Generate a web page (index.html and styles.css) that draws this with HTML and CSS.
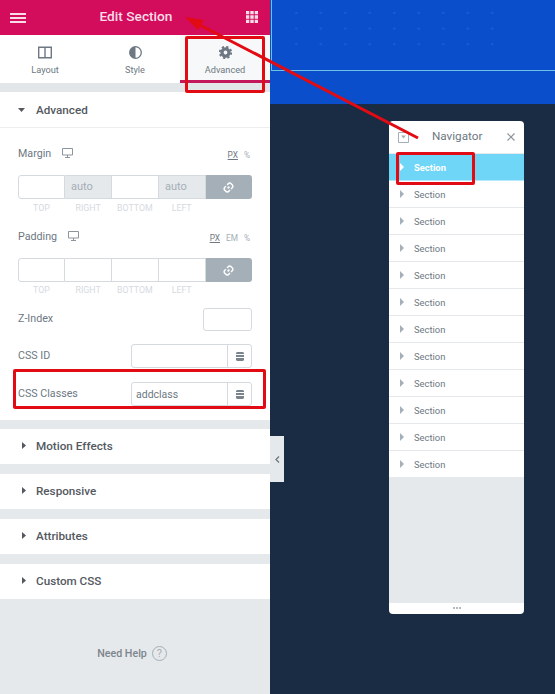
FILE: index.html
```html
<!DOCTYPE html>
<html lang="en">
<head>
<meta charset="utf-8">
<title>Edit Section</title>
<link rel="stylesheet" href="styles.css">
</head>
<body>
<div class="app">
  <aside class="panel">
    <header class="topbar">
      <svg class="ic-menu" width="16" height="10" viewBox="0 0 16 10"><path d="M0 0h16v2H0zM0 4h16v2H0zM0 8h16v2H0z" fill="#fbdde9"/></svg>
      <span class="topbar-title">Edit Section</span>
      <svg class="ic-grid" width="12" height="12" viewBox="0 0 12 12"><path d="M0 0h3.300v3.300H0zM4.300 0h3.400v3.300H4.300zM8.700 0H12v3.300H8.700zM0 4.300h3.300v3.400H0zM4.300 4.300h3.400v3.400H4.300zM8.700 4.300H12v3.400H8.700zM0 8.700h3.300V12H0zM4.300 8.700h3.400V12H4.300zM8.700 8.700H12V12H8.700z" fill="#fbdde9"/></svg>
    </header>
    <nav class="tabs">
      <div class="tab">
        <svg width="14" height="12" viewBox="0 0 14 12"><path d="M.7.700h12.600v10.600H.7zM7 .7v10.600" fill="none" stroke="#6d7882" stroke-width="1.400"/></svg>
        <span>Layout</span>
      </div>
      <div class="tab">
        <svg width="13" height="13" viewBox="0 0 13 13"><circle cx="6.500" cy="6.500" r="5.800" fill="none" stroke="#6d7882" stroke-width="1.300"/><path d="M6.500.7a5.800 5.800 0 0 0 0 11.600z" fill="#6d7882"/></svg>
        <span>Style</span>
      </div>
      <div class="tab tab-active">
        <svg width="13" height="13" viewBox="0 0 24 24" fill="none" stroke="#6d7882"><circle cx="12" cy="12" r="6.500" stroke-width="6"/><circle cx="12" cy="12" r="10.500" stroke-width="3.500" stroke-dasharray="4.250 4"/></svg>
        <span>Advanced</span>
      </div>
    </nav>
    <div class="band band-top"></div>

    <section class="acc acc-open">
      <svg class="caret" width="7" height="4" viewBox="0 0 7 4"><path d="M0 0h7L3.500 4z" fill="#54595f"/></svg>
      <span>Advanced</span>
    </section>
    <div class="content">
      <div class="label-row">
        <span class="label">Margin</span>
        <svg class="ic-device" width="11" height="10" viewBox="0 0 11 10"><path d="M.5.500h10v6.500H.5zM3 9.500h5M5.500 7v2.500" fill="none" stroke="#8d959c"/></svg>
        <span class="units"><u>PX</u><span>%</span></span>
      </div>
      <div class="dims">
        <span class="dim"></span>
        <span class="dim dim-auto">auto</span>
        <span class="dim"></span>
        <span class="dim dim-auto">auto</span>
        <span class="link"><svg width="11" height="11" viewBox="0 0 11 11"><path d="M4.600 6.400 6.400 4.600M4.200 3l1-1.200a2 2 0 0 1 3 0l1 1a2 2 0 0 1 0 3L8 7M3 4.200 1.800 5.300a2 2 0 0 0 0 3l1 1a2 2 0 0 0 3 0L7 8" fill="none" stroke="#fff" stroke-width="1.500"/></svg></span>
      </div>
      <div class="dim-labels"><span>TOP</span><span>RIGHT</span><span>BOTTOM</span><span>LEFT</span></div>

      <div class="label-row label-row-pad">
        <span class="label">Padding</span>
        <svg class="ic-device" width="11" height="10" viewBox="0 0 11 10"><path d="M.5.500h10v6.500H.5zM3 9.500h5M5.500 7v2.500" fill="none" stroke="#8d959c"/></svg>
        <span class="units"><u>PX</u><span>EM</span><span>%</span></span>
      </div>
      <div class="dims">
        <span class="dim"></span>
        <span class="dim"></span>
        <span class="dim"></span>
        <span class="dim"></span>
        <span class="link"><svg width="11" height="11" viewBox="0 0 11 11"><path d="M4.600 6.400 6.400 4.600M4.200 3l1-1.200a2 2 0 0 1 3 0l1 1a2 2 0 0 1 0 3L8 7M3 4.200 1.800 5.300a2 2 0 0 0 0 3l1 1a2 2 0 0 0 3 0L7 8" fill="none" stroke="#fff" stroke-width="1.500"/></svg></span>
      </div>
      <div class="dim-labels dim-labels-pad"><span>TOP</span><span>RIGHT</span><span>BOTTOM</span><span>LEFT</span></div>

      <div class="field field-z">
        <span class="label">Z-Index</span>
        <span class="zbox"></span>
      </div>
      <div class="field field-id">
        <span class="label">CSS ID</span>
        <span class="inputgroup">
          <span class="input"></span>
          <span class="db"><svg width="8" height="9" viewBox="0 0 8 9"><path d="M1 0h6l1 1v1H0V1zM0 3h8v2H0zM0 6h8v2L7 9H1L0 8z" fill="#7a848d"/></svg></span>
        </span>
      </div>
      <div class="field field-classes">
        <span class="label">CSS Classes</span>
        <span class="inputgroup">
          <span class="input">addclass</span>
          <span class="db"><svg width="8" height="9" viewBox="0 0 8 9"><path d="M1 0h6l1 1v1H0V1zM0 3h8v2H0zM0 6h8v2L7 9H1L0 8z" fill="#7a848d"/></svg></span>
        </span>
      </div>
    </div>

    <div class="band band-first"></div>
    <section class="acc"><svg class="caret-r" width="4" height="7" viewBox="0 0 4 7"><path d="M0 0l4 3.500L0 7z" fill="#54595f"/></svg><span>Motion Effects</span></section>
    <div class="band"></div>
    <section class="acc"><svg class="caret-r" width="4" height="7" viewBox="0 0 4 7"><path d="M0 0l4 3.500L0 7z" fill="#54595f"/></svg><span>Responsive</span></section>
    <div class="band"></div>
    <section class="acc"><svg class="caret-r" width="4" height="7" viewBox="0 0 4 7"><path d="M0 0l4 3.500L0 7z" fill="#54595f"/></svg><span>Attributes</span></section>
    <div class="band"></div>
    <section class="acc"><svg class="caret-r" width="4" height="7" viewBox="0 0 4 7"><path d="M0 0l4 3.500L0 7z" fill="#54595f"/></svg><span>Custom CSS</span></section>

    <footer class="help">
      <span>Need Help</span>
      <span class="help-q">?</span>
    </footer>
  </aside>

  <main class="canvas">
    <div class="hero">
      <div class="hero-outline"><div class="hero-dots"></div></div>
    </div>
  </main>
</div>

<div class="collapse"><svg width="5" height="7" viewBox="0 0 5 7"><path d="M4 .5 1 3.500l3 3" fill="none" stroke="#6d7882" stroke-width="1.300"/></svg></div>

<div class="navigator">
  <div class="nav-head">
    <svg class="nav-ic" width="11" height="11" viewBox="0 0 11 11"><path d="M.5.500h10v10H.5z" fill="none" stroke="#a4afb7"/><path d="M3 3.500h5L5.500 6.500z" fill="#a4afb7"/></svg>
    <span class="nav-title">Navigator</span>
    <svg class="nav-x" width="8" height="8" viewBox="0 0 8 8"><path d="M.5.500l7 7M7.500.5l-7 7" stroke="#8d959c" stroke-width="1.200"/></svg>
  </div>
  <div class="nav-row nav-row-active"><i></i><span>Section</span></div>
  <div class="nav-row"><i></i><span>Section</span></div>
  <div class="nav-row"><i></i><span>Section</span></div>
  <div class="nav-row"><i></i><span>Section</span></div>
  <div class="nav-row"><i></i><span>Section</span></div>
  <div class="nav-row"><i></i><span>Section</span></div>
  <div class="nav-row"><i></i><span>Section</span></div>
  <div class="nav-row"><i></i><span>Section</span></div>
  <div class="nav-row"><i></i><span>Section</span></div>
  <div class="nav-row"><i></i><span>Section</span></div>
  <div class="nav-row"><i></i><span>Section</span></div>
  <div class="nav-row"><i></i><span>Section</span></div>
  <div class="nav-empty"></div>
  <div class="nav-foot"><b></b><b></b><b></b></div>
</div>

<svg class="arrow" width="555" height="694" viewBox="0 0 555 694">
  <path d="M418 138 196 23" stroke="#e30b13" stroke-width="3" fill="none"/>
  <path d="M185 17 204 20 198 30z" fill="#e30b13"/>
</svg>
<div class="mark mark-tab"></div>
<div class="mark mark-classes"></div>
<div class="mark mark-section"></div>
</body>
</html>
```
FILE: styles.css
```css
* { box-sizing: border-box; }
html, body { margin: 0; height: 100%; }
body {
  position: relative;
  width: 555px;
  height: 694px;
  overflow: hidden;
  font-family: Roboto, "Liberation Sans", sans-serif;
  background: #1a2c44;
}
.app { display: flex; height: 694px; }

.panel {
  width: 270px;
  flex: none;
  height: 694px;
  background: #e6e9ec;
  display: flex;
  flex-direction: column;
}
.topbar {
  height: 35px;
  flex: none;
  background: #d30c5c;
  display: flex;
  align-items: center;
  justify-content: space-between;
  padding: 0 12px 0 10px;
}
.topbar-title { font-size: 13.700px; font-weight: 500; color: #fbdde9; margin-bottom: 3px; }
.ic-menu { margin-top: 1px; }
.ic-grid { margin-top: -1px; }

.tabs { height: 48px; flex: none; display: flex; background: #fff; }
.tab {
  width: 90px;
  display: flex;
  flex-direction: column;
  align-items: center;
  padding-top: 11px;
  gap: 5px;
  font-size: 9.200px;
  color: #6d7882;
}
.tab svg { height: 13px; }
.tab-active { background: #f7f8f9; border-bottom: 3px solid #c2185b; }

.band { height: 10px; flex: none; background: #e6e9ec; }
.band-top { height: 9px; background: #e3e6e9; }
.band-first { height: 9px; }

.acc {
  height: 35px;
  flex: none;
  display: flex;
  align-items: center;
  background: #fff;
  padding: 0 0 2px 18px;
  font-size: 11.700px;
  font-weight: 500;
  color: #54595f;
}
.acc .caret { margin-right: 11px; }
.acc .caret-r { margin: 0 10px 0 4px; }
.acc-open { height: 36px; padding-bottom: 0; border-bottom: 1px solid #eceef0; }

.content { height: 292px; flex: none; background: #fff; padding: 0 18px; }
.label-row { display: flex; align-items: center; height: 14px; margin-top: 18px; }
.label-row-pad { margin-top: 16px; }
.label { font-size: 10.700px; color: #6d7882; }
.field .label { margin-bottom: 2px; }
.ic-device { margin-left: 11px; }
.units {
  margin-left: auto;
  margin-right: 2px;
  display: flex;
  gap: 6px;
  font-size: 8.300px;
  color: #6d7882;
  padding-top: 3px;
}
.units span { color: #a4afb7; }

.dims { display: flex; height: 24px; margin-top: 15px; }
.dim {
  width: 47px;
  border: 1px solid #d5dadf;
  border-left-width: 0;
  font-size: 11px;
  color: #a4afb7;
  line-height: 22px;
  padding-left: 6.500px;
}
.dim:first-child { width: 46.500px; border-left-width: 1px; border-radius: 3px 0 0 3px; }
.dim-auto { background: #e6e9ec; }
.link {
  width: 46.500px;
  background: #a4afb7;
  border-radius: 0 3px 3px 0;
  display: flex;
  align-items: center;
  justify-content: center;
}
.dim-labels { display: flex; width: 187px; margin-top: 4px; }
.dim-labels-pad { margin-top: 3px; }
.dim-labels span { width: 47px; text-align: center; font-size: 8.800px; color: #d5dadf; line-height: 10px; }

.field { display: flex; align-items: center; justify-content: space-between; }
.field-z { margin-top: 13px; }
.field-id { margin-top: 13px; }
.field-classes { margin-top: 14px; }
.zbox { width: 49px; height: 23px; border: 1px solid #d5dadf; border-radius: 3px; }
.inputgroup {
  display: flex;
  width: 121px;
  height: 24px;
  border: 1px solid #d5dadf;
  border-radius: 3px;
}
.input { flex: 1; font-size: 10.500px; color: #6d7882; padding: 0 4px; line-height: 24px; }
.db {
  width: 24px;
  border-left: 1px solid #d5dadf;
  display: flex;
  align-items: center;
  justify-content: center;
}

.help {
  flex: 1;
  display: flex;
  align-items: center;
  justify-content: center;
  gap: 5px;
  font-size: 10.700px;
  font-weight: 500;
  color: #7d858c;
  padding: 13px 6px 0 0;
}
.help-q {
  width: 15px;
  height: 15px;
  border: 1px solid #a4afb7;
  border-radius: 50%;
  color: #a4afb7;
  font-size: 11px;
  font-weight: 400;
  line-height: 13px;
  text-align: center;
}

.canvas { flex: 1; }
.hero { height: 104px; background: #0a4ecb; padding: 0 0 0 1px; }
.hero-outline {
  height: 71px;
  border-left: 1px solid #6ec1e4;
  border-bottom: 1px solid #6ec1e4;
  padding: 5px 0 0 12px;
}
.hero-dots {
  width: 221px;
  height: 54px;
  background-image: radial-gradient(circle, #1d5cd3 1px, transparent 1.300px);
  background-size: 24.500px 15.700px;
}

.collapse {
  position: absolute;
  left: 270px;
  top: 436px;
  width: 14px;
  height: 46px;
  background: #e6e9ec;
  display: flex;
  align-items: center;
  justify-content: center;
}

.navigator {
  position: absolute;
  left: 389px;
  top: 121px;
  width: 135px;
  height: 493px;
  background: #fff;
  border-radius: 4px;
  overflow: hidden;
  display: flex;
  flex-direction: column;
}
.nav-head {
  height: 33px;
  flex: none;
  display: flex;
  align-items: center;
  border-bottom: 1px solid #e6e9ec;
  padding: 0 9px;
}
.nav-title { font-size: 11.700px; color: #6d7882; margin: 0 0 3px 23px; }
.nav-ic { flex: none; }
.nav-x { margin: 0 0 1px auto; }
.nav-row {
  height: 27px;
  flex: none;
  display: flex;
  align-items: center;
  border-bottom: 1px solid #e6e9ec;
  padding-left: 11px;
  font-size: 9.400px;
  color: #6d7882;
}
.nav-row i {
  width: 0;
  height: 0;
  border-left: 4px solid #a4afb7;
  border-top: 4px solid transparent;
  border-bottom: 4px solid transparent;
  margin-right: 10px;
}
.nav-row-active { background: #6fd6f7; color: #fff; font-weight: 700; border-bottom-color: #b7e9fa; }
.nav-row-active i { border-left-color: #fff; }
.nav-empty { flex: 1; background: #e6e9ec; }
.nav-foot {
  height: 11px;
  flex: none;
  display: flex;
  justify-content: center;
  align-items: center;
  gap: 1px;
  padding-bottom: 1px;
}
.nav-foot b { width: 2px; height: 2px; background: #b4bbc1; }

.arrow { position: absolute; left: 0; top: 0; pointer-events: none; }
.mark { position: absolute; border: 3px solid #e30b13; border-radius: 2px; }
.mark-tab { left: 185px; top: 36px; width: 80px; height: 57px; }
.mark-classes { left: 13px; top: 369px; width: 253px; height: 40px; }
.mark-section { left: 396px; top: 152px; width: 79px; height: 33px; }
```
